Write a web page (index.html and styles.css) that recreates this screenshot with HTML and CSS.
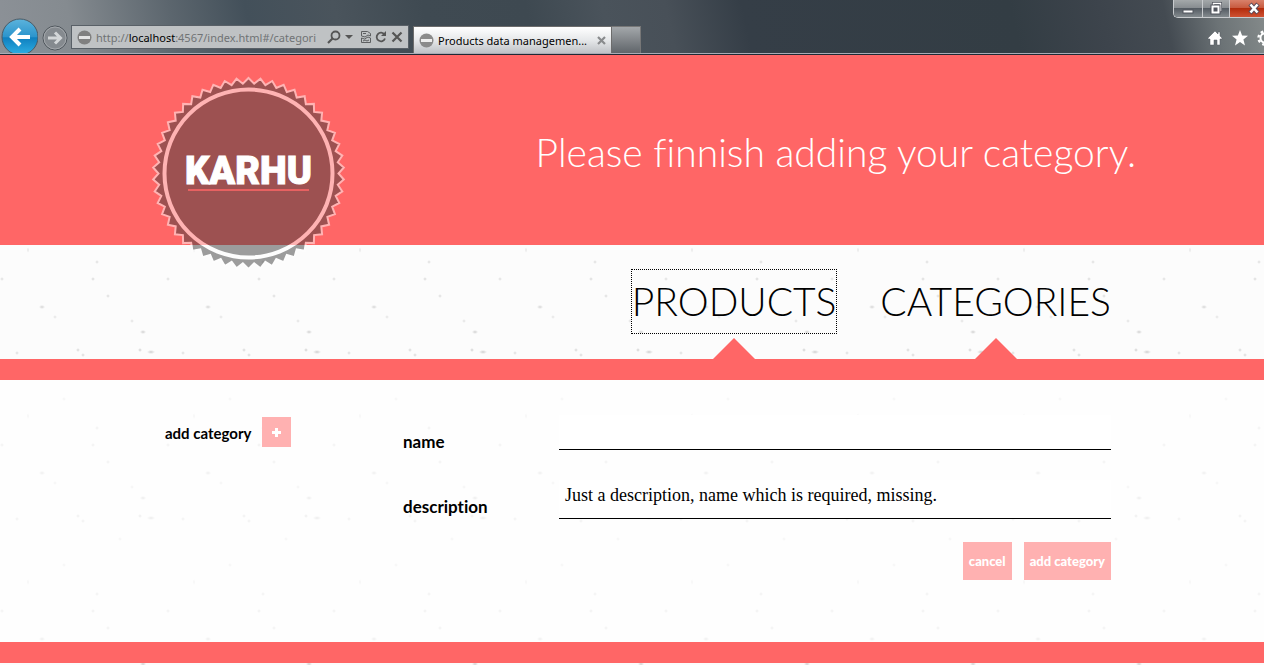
FILE: index.html
```html
<!DOCTYPE html>
<html lang="en">
<head>
<meta charset="utf-8">
<title>Products data management</title>
<link rel="stylesheet" href="styles.css">
</head>
<body>
<div class="browser">
  <div class="toolbar">
    <button class="round back" aria-label="Back"><svg width="38" height="35" viewBox="0 0 38 35"><defs><linearGradient id="blue" x1="0" y1="0" x2="0" y2="1"><stop offset="0" stop-color="#5cb3dc"/><stop offset=".5" stop-color="#2b94cc"/><stop offset=".52" stop-color="#0f7fbf"/><stop offset="1" stop-color="#2fb0e4"/></linearGradient></defs><circle cx="20" cy="19" r="18" fill="url(#blue)" stroke="#4c5a64"/><path d="M30 19H12M20 11l-8 8 8 8" fill="none" stroke="#fff" stroke-width="4"/></svg></button>
    <button class="round" aria-label="Forward"><svg width="26" height="26" viewBox="0 0 26 26"><circle cx="13" cy="13" r="12" fill="#858a8f" stroke="#4f565c"/><circle cx="13" cy="13" r="11" fill="none" stroke="#a4a8ac"/><path d="M6 13h12M13 7.500l5.500 5.500-5.500 5.500" fill="none" stroke="#d3d6d8" stroke-width="3"/></svg></button>
    <div class="address">
      <svg width="15" height="15" viewBox="0 0 15 15"><circle cx="7.500" cy="7.500" r="7" fill="#808080"/><rect x="2" y="6" width="11" height="3" fill="#e4e4e4"/></svg>
      <div class="url" role="textbox" aria-label="Address" contenteditable="true" spellcheck="false">http://<span class="host">localhost</span>:4567/index.html#/categori</div>
      <button class="tool" aria-label="Search"><svg width="14" height="14" viewBox="0 0 14 14"><circle cx="8.500" cy="5.500" r="4" fill="none" stroke="#555" stroke-width="1.800"/><path d="M5.500 8.500L1 13" stroke="#555" stroke-width="2.200"/></svg></button>
      <button class="tool" aria-label="Show address list"><svg width="8" height="14" viewBox="0 0 8 14"><path d="M0 5h8L4 9z" fill="#555"/></svg></button>
      <button class="tool wide" aria-label="Compatibility view"><svg width="10" height="14" viewBox="0 0 10 14"><path d="M.500 6V1.500h6l3 2V6L7 5 4 7zM.500 8l3 1L7 7l2.500 1v4.500h-9z" fill="none" stroke="#5d5f61"/><path d="M2 11l2-1 2 1 2-1M2 3.500h3" fill="none" stroke="#5d5f61"/></svg></button>
      <button class="tool" aria-label="Refresh"><svg width="12" height="14" viewBox="0 0 12 14"><path d="M9.500 4.500A4.300 4.300 0 1 0 10 8.500" fill="none" stroke="#555" stroke-width="1.800"/><path d="M11 1v5H6z" fill="#555"/></svg></button>
      <button class="tool" aria-label="Stop"><svg width="12" height="14" viewBox="0 0 12 14"><path d="M1.500 2.500l9 9M10.500 2.500l-9 9" stroke="#555" stroke-width="2.200"/></svg></button>
    </div>
    <div class="tab">
      <svg width="15" height="15" viewBox="0 0 15 15"><circle cx="7.500" cy="7.500" r="7" fill="#8b8b8b"/><rect x="2" y="6" width="11" height="3" fill="#eee"/></svg>
      <span class="tab-title">Products data managemen...</span>
      <button class="tool" aria-label="Close tab"><svg width="9" height="9" viewBox="0 0 9 9"><path d="M1 1l7 7M8 1L1 8" stroke="#898b8d" stroke-width="2.200"/></svg></button>
    </div>
    <button class="new-tab" aria-label="New tab"></button>
  </div>
  <div class="corner">
    <div class="window-buttons">
      <button class="win min" aria-label="Minimize"><svg width="12" height="13" viewBox="0 0 12 13"><rect x="1" y="8" width="10" height="3" fill="#fff" stroke="#50545c"/></svg></button>
      <button class="win" aria-label="Restore"><svg width="12" height="13" viewBox="0 0 12 13"><path d="M3.500 3.500V1.500h7v7h-2" fill="none" stroke="#50545c" stroke-width="3"/><path d="M3.500 3.500V1.500h7v7h-2" fill="none" stroke="#fff" stroke-width="1.500"/><rect x="2.500" y="4.500" width="6" height="6" fill="none" stroke="#50545c" stroke-width="4"/><rect x="2.500" y="4.500" width="6" height="6" fill="#50545c" stroke="#fff" stroke-width="2"/></svg></button>
      <button class="win close" aria-label="Close"><svg width="13" height="13" viewBox="0 0 13 13"><path d="M2 2l8 9M10 2l-8 9" stroke="#5b4a58" stroke-width="4.500"/><path d="M2.500 2.500l7 8M9.500 2.500l-7 8" stroke="#fff" stroke-width="2.600"/></svg></button>
    </div>
    <div class="shortcuts">
      <button class="tool" aria-label="Home"><svg width="16" height="16" viewBox="0 0 16 16"><path d="M8 1L1 8v1h2v6h4v-5h3v5h3V9h2V8l-2-2V2h-2v2z" fill="#fff" stroke="#555b61" stroke-width=".500"/></svg></button>
      <button class="tool" aria-label="Favorites"><svg width="16" height="16" viewBox="0 0 16 16"><path d="M8 0l2.100 5.500 5.900.300-4.600 3.700L13 15.500 8 12l-5 3.500 1.600-6L0 5.800l5.900-.300z" fill="#fff"/></svg></button>
      <button class="tool" aria-label="Tools"><svg width="16" height="16" viewBox="0 0 16 16"><circle cx="8" cy="8" r="4.500" fill="none" stroke="#fff" stroke-width="2"/><circle cx="8" cy="8" r="6.500" fill="none" stroke="#fff" stroke-width="2.400" stroke-dasharray="2.550 2.550"/></svg></button>
    </div>
  </div>
</div>
<div class="page">
  <header class="banner">
    <div class="container banner-row">
      <a class="logo" href="#/" aria-label="Karhu home"><svg class="seal" width="192" height="192" viewBox="0 0 192 192"><g opacity=".5"><polygon id="seal" fill="#3e3e3e" stroke="#fff" stroke-width="2"/><circle cx="96.500" cy="95.500" r="84" fill="none" stroke="#fff" stroke-width="4"/></g><text class="logo-text" x="96.500" y="106" text-anchor="middle">KARHU</text><rect x="36" y="111" width="121" height="2" fill="#e76161"/></svg></a>
      <p class="message">Please finnish adding your category.</p>
    </div>
  </header>
  <nav class="menu">
    <ul class="container menu-list">
      <li class="menu-item"><a class="menu-link focused" href="#/products">PRODUCTS</a></li>
      <li class="menu-item"><a class="menu-link" href="#/categories">CATEGORIES</a></li>
    </ul>
  </nav>
  <main class="content">
    <div class="container columns">
      <div class="side">
        <label for="add">add category</label>
        <button class="plus" id="add"><svg width="9" height="9" viewBox="0 0 9 9"><path d="M4.500 0v9M0 4.500h9" stroke="#fff" stroke-width="3"/></svg></button>
      </div>
      <form class="form">
        <label class="label" for="name">name</label>
        <input class="field" id="name" type="text">
        <label class="label" for="description">description</label>
        <textarea class="field area" id="description" rows="1">Just a description, name which is required, missing.</textarea>
        <div class="actions">
          <button class="action" type="button">cancel</button>
          <button class="action" type="submit">add category</button>
        </div>
      </form>
    </div>
  </main>
</div>
<script src="seal.js"></script>
</body>
</html>
```
FILE: seal.js
```js
// Serrated edge of the logo: alternating outer and inner radii.
const teeth = 50;
const points = [];
for (let i = 0; i < teeth * 2; i++) {
  const radius = i % 2 ? 90 : 95.5;
  const angle = (Math.PI * i) / teeth - Math.PI / 2;
  points.push((96.5 + radius * Math.cos(angle)).toFixed(2) + "," + (95.5 + radius * Math.sin(angle)).toFixed(2));
}
document.getElementById("seal").setAttribute("points", points.join(" "));
```
FILE: styles.css
```css
* { box-sizing: border-box; }
body { margin: 0; min-height: 100vh; display: flex; flex-direction: column; overflow-x: hidden; font-family: Lato, sans-serif; font-variant-ligatures: none; color: #000; }
button { margin: 0; padding: 0; border: 0; background: none; font: inherit; }
svg { display: block; flex: none; }

.browser {
  display: flex; justify-content: space-between; height: 55px; overflow: hidden;
  border-bottom: 1px solid #1f2a35; box-shadow: inset 0 -1px #a9abb5;
  background: linear-gradient(78deg, #8c9197 0, #858b90 6%, #5c666e 14%, #43505a 20%, #4a545c 27%, #3f4a52 34%, #3e4951 42%, #4a535b 48%, #485058 53%, #353e47 59%, #333d44 80%, #3d444c 87%, #444b52 92%, #6c7376 96%, #858b8b 100%);
}
.toolbar { display: flex; align-items: flex-end; padding-bottom: 1px; font-family: "Noto Sans", sans-serif; font-size: 11px; }
.round { margin-right: 4px; margin-bottom: 2px; }
.back { margin-bottom: 0; }
.address { display: flex; align-items: center; width: 338px; height: 24px; margin: 0 4px 4px -1px; padding: 0 5px; border: 1px solid #596067; background: #bfc2c4; }
.url { flex: 1; min-width: 0; margin: 0 4px; overflow: hidden; white-space: nowrap; color: #707375; outline: 0; }
.host { color: #000; }
.tool { flex: none; margin-left: 4px; }
.wide { margin-left: 8px; }
.tab { display: flex; align-items: center; width: 199px; height: 27px; padding: 0 5px; border: 1px solid #6c6c6c; border-bottom: 0; background: linear-gradient(#fff, #e6e8ea 50%, #bfc2c6); }
.tab-title { flex: 1; margin-left: 4px; white-space: nowrap; }
.new-tab { width: 29px; height: 27px; border: 1px solid #777; border-width: 1px 1px 0 0; background: linear-gradient(#a3a7aa, #60656a); }
.corner { display: flex; flex-direction: column; align-items: flex-end; width: 91px; }
.window-buttons { display: flex; width: 91px; height: 18px; border: 1px solid #c8cbce; border-width: 0 0 1px 1px; border-radius: 0 0 0 5px; overflow: hidden; }
.win { display: flex; flex: none; justify-content: center; align-items: center; width: 27px; height: 17px; border-right: 1px solid #c8cbce; background: linear-gradient(#a4a8aa, #888d91 45%, #555c63 50%, #838a8e); }
.min { width: 29px; }
.close { width: 49px; background: linear-gradient(#d8816b, #c85b40 45%, #b32c0c 50%, #cf5132); }
.shortcuts { display: flex; width: 61px; margin-top: 12px; gap: 5px; }

.page {
  flex: 1; background-color: #fcfcfc; background-size: 166px 166px;
  background-image:
    radial-gradient(ellipse 1px 3px at 28px 29px, #e0e0e0, #e0e0e000),
    radial-gradient(circle at 97px 41px, #dcdcdc, #dcdcdc00 2px),
    radial-gradient(circle at 93px 58px, #d8d8d8, #d8d8d800 2px),
    radial-gradient(circle at 2px 58px, #dcdcdc, #dcdcdc00 2px),
    radial-gradient(ellipse 3px 2px at 42px 86px, #d4d4d4, #d4d4d400),
    radial-gradient(circle at 108px 75px, #dadada, #dadada00 2px),
    radial-gradient(circle at 55px 96px, #e2e2e2, #e2e2e200 2px),
    radial-gradient(circle at 132px 100px, #e0e0e0, #e0e0e000 2px),
    radial-gradient(ellipse 3px 2px at 143px 111px, #d0d0d0, #d0d0d000),
    radial-gradient(circle at 140px 129px, #d0d0d0, #d0d0d000 2px),
    radial-gradient(ellipse 4px 2px at 151px 131px, #d0d0d0, #d0d0d000),
    radial-gradient(circle at 78px 129px, #d6d6d6, #d6d6d600 2px),
    radial-gradient(circle at 83px 134px, #d8d8d8, #d8d8d800 2px),
    radial-gradient(circle at 17px 132px, #dcdcdc, #dcdcdc00 2px),
    radial-gradient(circle at 64px 12px, #e4e4e4, #e4e4e400 2px),
    radial-gradient(circle at 120px 152px, #e4e4e4, #e4e4e400 2px);
}
.container { width: 100%; max-width: 960px; margin: 0 auto; }
.banner { background: #f66; }
.banner-row { display: flex; justify-content: space-between; height: 190px; }
.logo { position: relative; z-index: 1; width: 192px; height: 192px; margin-top: 23px; }
.seal { overflow: visible; }
.logo-text { fill: #fff; stroke: #fff; stroke-width: 1px; font: 900 38px Roboto, sans-serif; }
.message { margin: 69px -24px 0 0; color: #fff; font-size: 39px; font-weight: 300; line-height: 56px; white-space: nowrap; }
.menu { border-bottom: 21px solid #f66; }
.menu-list { display: flex; justify-content: flex-end; gap: 42px; padding: 24px 0 0; list-style: none; }
.menu-item { display: flex; flex-direction: column; align-items: center; }
.menu-item::after { content: ""; margin-top: 4px; border: solid transparent; border-width: 0 21px 21px; border-bottom-color: #f66; }
.menu-link { display: block; border: 1px solid transparent; color: #000; font-size: 39px; font-weight: 300; line-height: 63px; text-decoration: none; }
.focused { border: 1px dotted #000; }
.content { border-bottom: 21px solid #f66; background: #ffffff99; }
.columns { display: flex; padding: 35px 1px 62px 13px; font-weight: 700; }
.side { display: flex; align-items: flex-start; width: 238px; margin-top: 2px; gap: 11px; font-size: 15px; line-height: 32px; }
.plus { display: flex; align-items: center; justify-content: center; width: 29px; height: 30px; background: #ffb1b1; }
.form { display: grid; flex: 1; grid-template-columns: 156px 1fr; font-size: 17px; row-gap: 30px; }
.label { padding-top: 19px; line-height: 16px; }
.field { width: 100%; height: 35px; padding: 0 6px; border: 0; border-bottom: 1px solid #000; border-radius: 0; background: #fff; font: 18px/22px "Liberation Serif", serif; outline: 0; resize: none; }
.area { display: block; height: 39px; padding-top: 4px; overflow: hidden; }
.actions { display: flex; grid-column: 1 / 3; justify-content: flex-end; gap: 12px; margin-top: -7px; }
.action { height: 38px; padding: 0 6px; background: #ffb1b1; color: #fff; font-size: 13px; font-weight: 900; }
```
